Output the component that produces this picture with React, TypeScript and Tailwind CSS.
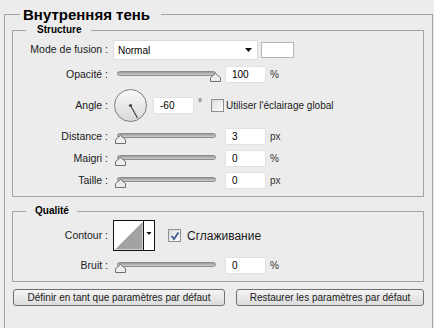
import React from "react";

const font = "font-['Liberation_Sans',Arial,sans-serif]";

function Slider({ pos }: { pos: number }) {
  return (
    <div className="relative h-[17px] w-[108px] shrink-0">
      <div className="absolute left-[4px] right-[5px] top-[5px] h-[5px] rounded-full border border-[#8c8c8c] bg-linear-to-b from-[#9a9a9a] to-[#cfcfcf]" />
      <svg className="absolute top-[7px]" style={{ left: pos }} width="11" height="9" viewBox="0 0 11 9">
        <path d="M0.5 8.5 V4.5 L5.5 0.5 L10.5 4.5 V8.5 Z" fill="#ededed" stroke="#6f6f6f" />
      </svg>
    </div>
  );
}

function Field({ value, w = "w-[41px]" }: { value: string; w?: string }) {
  return (
    <div className={`${w} flex h-[17px] shrink-0 items-center border border-[#e2e2e2] bg-white pl-[6px] text-[10px] text-black`}>
      {value}
    </div>
  );
}

function Check({ checked }: { checked?: boolean }) {
  return (
    <div className="flex h-[13px] w-[13px] shrink-0 items-center justify-center border border-[#8e8f8f] bg-linear-to-br from-[#dcdcdc] to-[#ffffff]">
      {checked && (
        <svg width="10" height="10" viewBox="0 0 10 10">
          <path d="M1.5 5 L4 8 L8.5 1.5" fill="none" stroke="#3c5a94" strokeWidth="1.8" />
        </svg>
      )}
    </div>
  );
}

function Label({ text }: { text: string }) {
  return <div className="w-[96px] shrink-0 pr-[1px] text-right text-[10.5px] text-[#1a1a1a]">{text}</div>;
}

function SliderRow({ label, pos, value, unit, mt }: { label: string; pos: number; value: string; unit: string; mt: string }) {
  return (
    <div className={`flex h-[17px] items-center ${mt}`}>
      <Label text={label} />
      <div className="ml-[4px]">
        <Slider pos={pos} />
      </div>
      <div className="ml-[4px]">
        <Field value={value} />
      </div>
      <span className="ml-[4px] text-[10px] text-[#333]">{unit}</span>
    </div>
  );
}

export default function App() {
  return (
    <div className={`h-[328px] w-[434px] overflow-hidden bg-[#ececec] pt-[5px] ${font}`}>
      <fieldset className="ml-[4px] w-[429px] border border-[#a3a3a3] pb-[30px]">
        <legend className="ml-[15px] pl-[3px] pr-[11px] text-[15px] font-bold leading-[19px] text-black">
          Внутренняя тень
        </legend>

        <fieldset className="ml-[7px] w-[412px] border border-[#a3a3a3] pb-[7px]">
          <legend className="ml-[13px] pl-[11px] pr-[10px] text-[10px] font-bold leading-[12px] text-black">
            Structure
          </legend>

          <div className="mt-[4px] flex h-[20px] items-center">
            <Label text="Mode de fusion :" />
            <div className="ml-[4px] flex h-[20px] w-[145px] items-center justify-between border border-[#dadada] bg-white pl-[4px] pr-[5px] text-[10px] text-black">
              <span>Normal</span>
              <svg width="7" height="4" viewBox="0 0 7 4">
                <path d="M0 0 H7 L3.5 4 Z" fill="#111" />
              </svg>
            </div>
            <div className="ml-[3px] h-[16px] w-[33px] border border-[#b5b5b5] bg-white" />
          </div>

          <SliderRow label="Opacité :" pos={97} value="100" unit="%" mt="mt-[6px]" />

          <div className="mt-[6px] flex h-[33px] items-center">
            <Label text="Angle :" />
            <svg className="ml-[5px] shrink-0" width="33" height="33" viewBox="0 0 33 33">
              <defs>
                <linearGradient id="dial" x1="0" y1="0" x2="0" y2="1">
                  <stop offset="0" stopColor="#fafafa" />
                  <stop offset="1" stopColor="#d9d9d9" />
                </linearGradient>
              </defs>
              <circle cx="16.5" cy="16.5" r="16" fill="url(#dial)" stroke="#7a7a7a" />
              <circle cx="16.5" cy="16.5" r="1.6" fill="#444" />
              <line x1="16.5" y1="16.5" x2="23.5" y2="29" stroke="#444" strokeWidth="1.2" />
            </svg>
            <div className="ml-[6px]">
              <Field value="-60" />
            </div>
            <span className="ml-[4px] -mt-[6px] text-[10px] text-[#333]">°</span>
            <div className="ml-[9px]">
              <Check />
            </div>
            <span className="ml-[2px] text-[10px] text-[#1a1a1a]">Utiliser l'éclairage global</span>
          </div>

          <SliderRow label="Distance :" pos={2} value="3" unit="px" mt="mt-[6px]" />
          <SliderRow label="Maigri :" pos={2} value="0" unit="%" mt="mt-[5px]" />
          <SliderRow label="Taille :" pos={2} value="0" unit="px" mt="mt-[5px]" />
        </fieldset>

        <fieldset className="ml-[7px] mt-[8px] w-[412px] border border-[#a3a3a3] pb-[7px]">
          <legend className="ml-[13px] pl-[9px] pr-[8px] text-[10px] font-bold leading-[12px] text-black">
            Qualité
          </legend>

          <div className="mt-[3px] flex h-[31px] items-center">
            <Label text="Contour :" />
            <svg className="ml-[4px] shrink-0" width="42" height="31" viewBox="0 0 42 31">
              <rect x="0.5" y="0.5" width="41" height="30" fill="#fff" stroke="#111" />
              <polygon points="2,29.5 29.5,2 29.5,29.5" fill="#a3a3a3" />
              <line x1="30.5" y1="0" x2="30.5" y2="31" stroke="#111" />
              <path d="M33.5 12 H38.5 L36 15 Z" fill="#111" />
            </svg>
            <div className="ml-[13px]">
              <Check checked />
            </div>
            <span className="ml-[6px] text-[12px] text-[#1a1a1a]">Сглаживание</span>
          </div>

          <SliderRow label="Bruit :" pos={2} value="0" unit="%" mt="mt-[6px]" />
        </fieldset>

        <div className="ml-[8px] mt-[7px] flex gap-[11px]">
          <button className="flex h-[17px] w-[212px] items-center justify-center rounded-[3px] border border-[#707070] bg-linear-to-b from-[#f4f4f4] to-[#dcdcdc] text-[10px] text-[#1a1a1a]">
            Définir en tant que paramètres par défaut
          </button>
          <button className="flex h-[17px] w-[188px] items-center justify-center rounded-[3px] border border-[#707070] bg-linear-to-b from-[#f4f4f4] to-[#dcdcdc] text-[10px] text-[#1a1a1a]">
            Restaurer les paramètres par défaut
          </button>
        </div>
      </fieldset>
    </div>
  );
}
